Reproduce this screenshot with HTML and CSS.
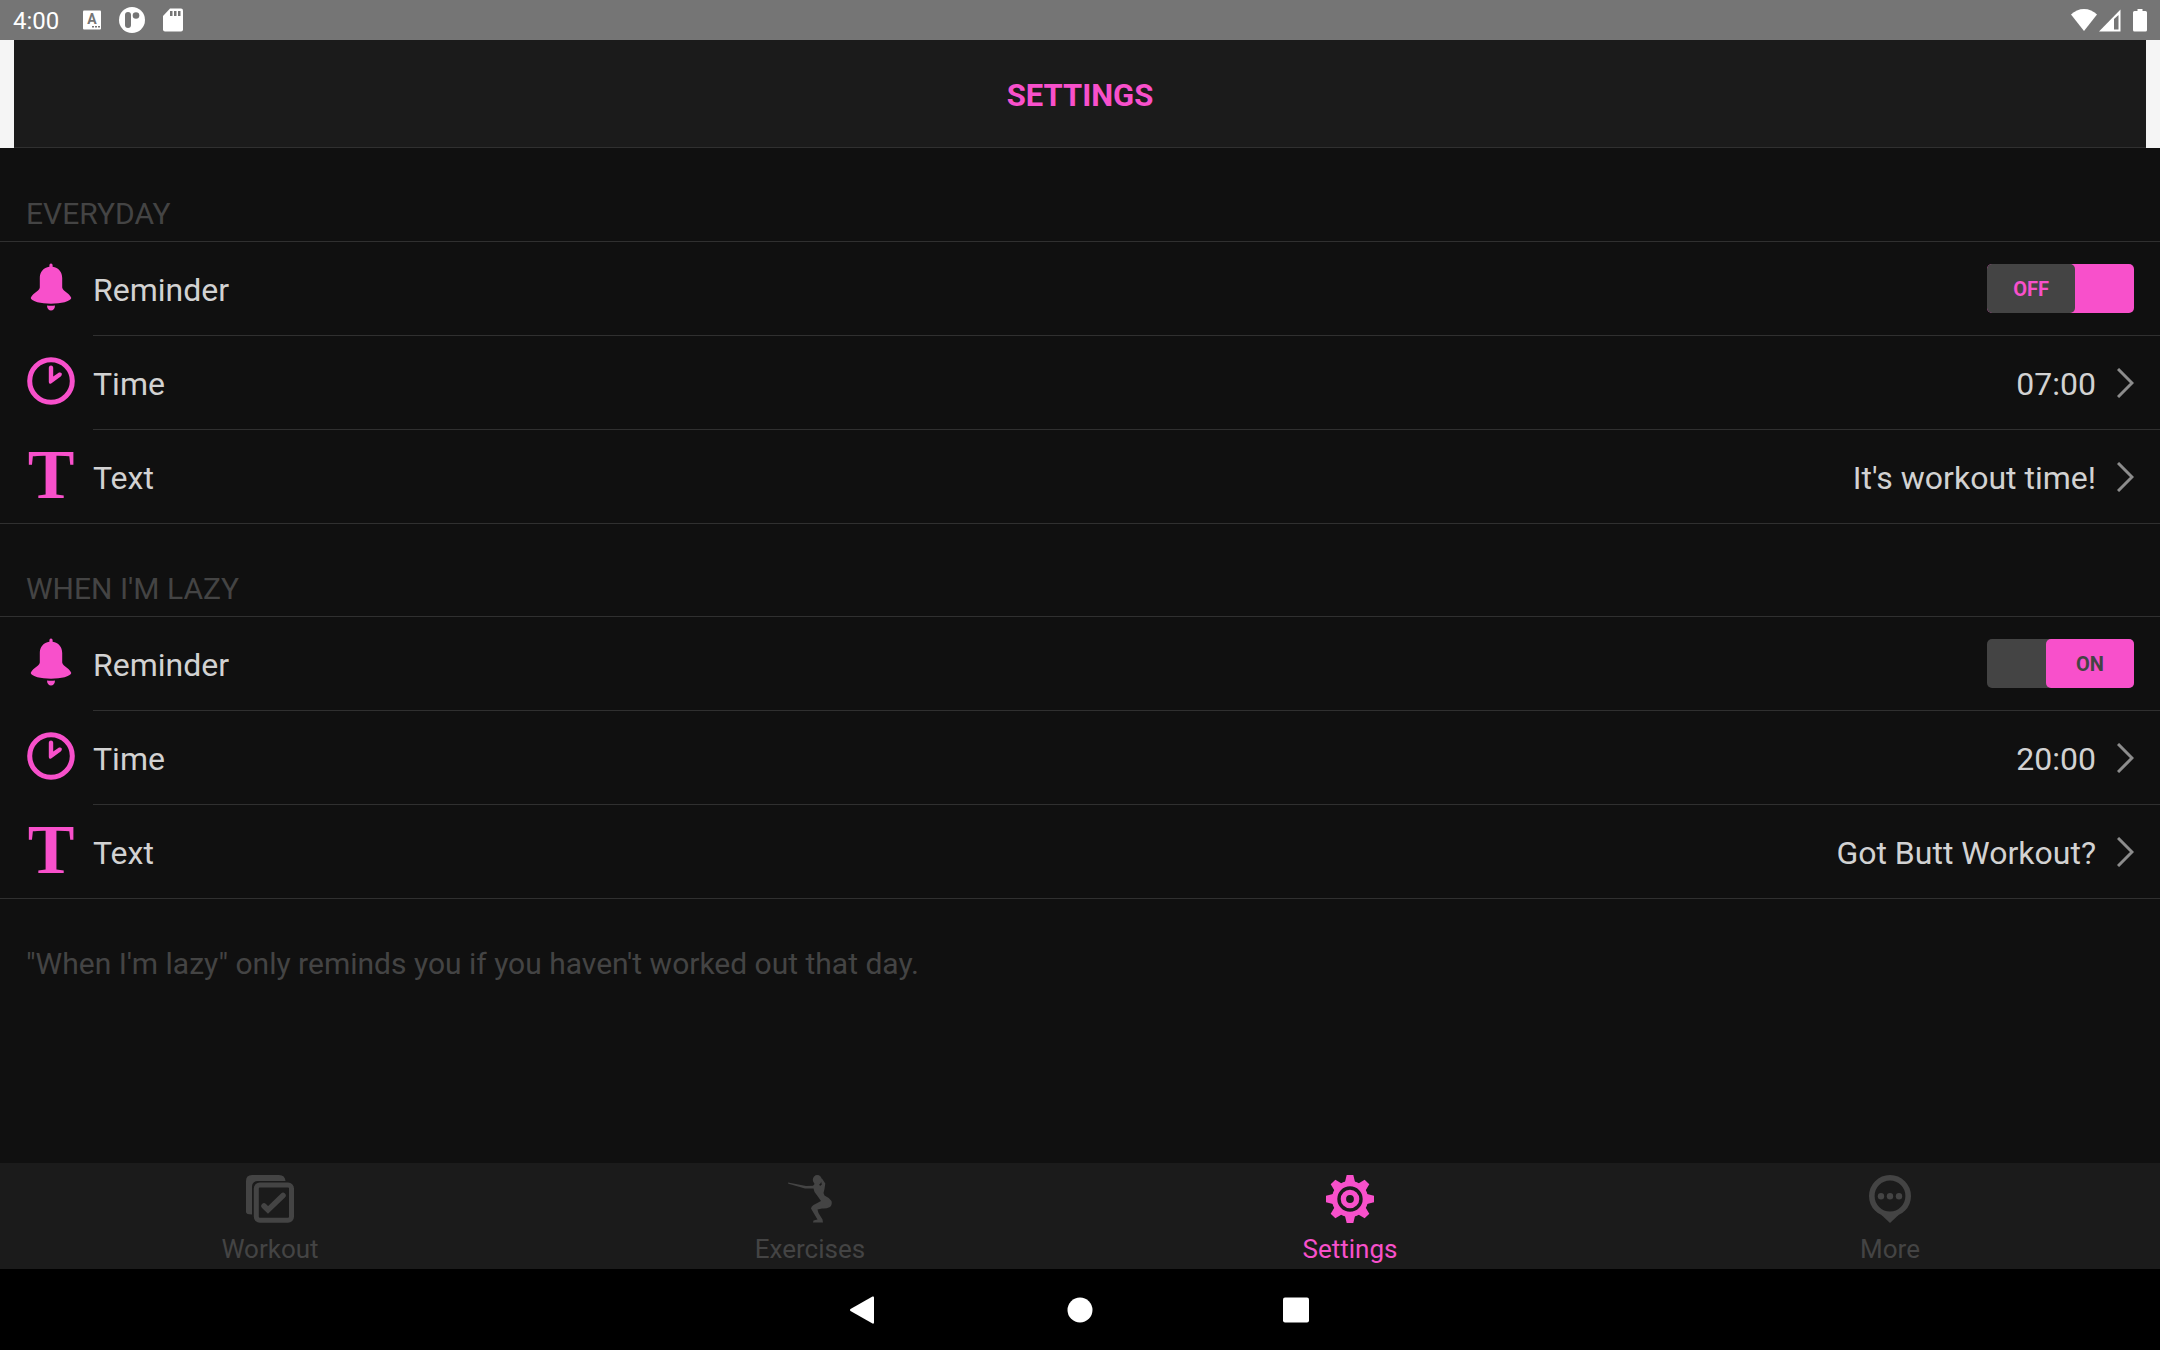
FILE: index.html
```html
<!DOCTYPE html>
<html lang="en">
<head>
    <meta charset="UTF-8">
    <meta name="viewport" content="width=device-width, initial-scale=1.0">
    <title>Settings</title>
    <link rel="stylesheet" href="styles.css">
</head>
<body>
    <!-- shared icons -->
    <svg class="sprite" aria-hidden="true">
        <symbol id="bell" viewBox="0 0 48 48">
            <path d="M22.4 1.8Q24 -.8 25.6 1.8V3.8C31.5 4.6 35.2 9 35.2 15V24.5Q35.4 26.2 37 27.6C40.5 30.4 43.6 32.6 44.3 35C43.5 38.5 34 40.7 24 40.7S4.5 38.5 3.7 35C4.4 32.6 7.5 30.4 11 27.6Q12.7 26.2 12.8 24.5V15C12.8 9 16.5 4.6 22.4 3.8ZM20 42.4Q24 42.9 28 42.4C28 49.2 20 49.2 20 42.4Z"/>
        </symbol>
        <symbol id="clock" viewBox="0 0 48 48">
            <circle cx="24" cy="24" r="21.3" fill="none" stroke="currentColor" stroke-width="5"/>
            <path d="M21.8 10.5Q22 8.6 24 8.6T26.200 10.5V19.500L32 15.600Q34.800 15 34.900 17Q34.700 18.600 33.700 19.400L24.500 26.300Q21.800 27.800 21.800 25Z"/>
        </symbol>
        <symbol id="chevron" viewBox="0 0 17 30">
            <path d="M1 1L15 15L1 29" fill="none" stroke="currentColor" stroke-width="3"/>
        </symbol>
    </svg>

    <div class="status-bar">
        <span class="clock">4:00</span>
        <div class="status-left">
            <svg width="18" height="20" viewBox="0 0 18 20"><rect y=".5" width="18" height="19" rx="1"/><text x="9" y="14" class="key-letter">A</text><path class="cut" d="M9 16h2v1.5H9zM12 16h2v1.5h-2zM15 16h2v1.5h-2z"/></svg>
            <svg width="26" height="26" viewBox="0 0 26 26"><circle cx="13" cy="13" r="13"/><rect class="cut" x="6" y="5" width="6" height="16" rx="3"/><circle class="cut" cx="17" cy="8.5" r="3.3"/></svg>
            <svg width="20" height="24" viewBox="0 0 20 24"><path d="M7 .5H18Q20 .5 20 2.5V21.5Q20 23.5 18 23.5H2Q0 23.5 0 21.5V8Z"/><path class="cut" d="M7 3h2.5v5H7zM11 3h2.5v5H11zM15 3h2.5v5H15z"/></svg>
        </div>
        <div class="status-right">
            <svg width="26" height="24" viewBox="0 0 26 24"><path d="M0 6.5C7 -1 19 -1 26 6.5L13 23Z"/></svg>
            <svg width="22" height="24" viewBox="0 0 22 24"><path d="M0 23.5L21.5 1.5V23.5Z"/><path class="cut" d="M15 11L19.5 7V21.5H15Z"/></svg>
            <svg class="battery" width="14" height="24" viewBox="0 0 14 24"><path d="M4.5 1H9.5V3H12.5Q14 3 14 4.5V22Q14 23.5 12.5 23.5H1.5Q0 23.5 0 22V4.5Q0 3 1.5 3H4.5Z"/></svg>
        </div>
    </div>

    <header class="header">
        <h1>SETTINGS</h1>
    </header>

    <main class="main">
        <section class="group">
            <h2>EVERYDAY</h2>
            <div class="rows">
                <label class="row">
                    <svg class="row-icon"><use href="#bell"/></svg>
                    <span class="row-body">
                        <span class="name">Reminder</span>
                        <span class="switch">
                            <input type="checkbox">
                            <span class="off">OFF</span>
                            <span class="on">ON</span>
                        </span>
                    </span>
                </label>
                <button class="row">
                    <svg class="row-icon"><use href="#clock"/></svg>
                    <span class="row-body">
                        <span class="name">Time</span>
                        <span class="value">07:00</span>
                        <svg class="chevron"><use href="#chevron"/></svg>
                    </span>
                </button>
                <button class="row">
                    <span class="row-icon letter" aria-hidden="true">T</span>
                    <span class="row-body">
                        <span class="name">Text</span>
                        <span class="value">It's workout time!</span>
                        <svg class="chevron"><use href="#chevron"/></svg>
                    </span>
                </button>
            </div>
        </section>

        <section class="group">
            <h2>WHEN I'M LAZY</h2>
            <div class="rows">
                <label class="row">
                    <svg class="row-icon"><use href="#bell"/></svg>
                    <span class="row-body">
                        <span class="name">Reminder</span>
                        <span class="switch">
                            <input type="checkbox" checked>
                            <span class="off">OFF</span>
                            <span class="on">ON</span>
                        </span>
                    </span>
                </label>
                <button class="row">
                    <svg class="row-icon"><use href="#clock"/></svg>
                    <span class="row-body">
                        <span class="name">Time</span>
                        <span class="value">20:00</span>
                        <svg class="chevron"><use href="#chevron"/></svg>
                    </span>
                </button>
                <button class="row">
                    <span class="row-icon letter" aria-hidden="true">T</span>
                    <span class="row-body">
                        <span class="name">Text</span>
                        <span class="value">Got Butt Workout?</span>
                        <svg class="chevron"><use href="#chevron"/></svg>
                    </span>
                </button>
            </div>
        </section>

        <p class="note">"When I'm lazy" only reminds you if you haven't worked out that day.</p>
    </main>

    <nav class="tabs">
        <a href="#workout">
            <svg viewBox="0 0 48 48">
                <path d="M0 37V6Q0 0 6 0H33Q39 0 39.5 6H12Q6 6 6 12V39.5Q0 39.5 0 37Z"/>
                <rect x="10.3" y="10.1" width="35.2" height="35.2" rx="3.5" fill="none" stroke="currentColor" stroke-width="5"/>
                <path d="M18 31L22 35L37 20.5" fill="none" stroke="currentColor" stroke-width="5.5" stroke-linecap="round"/>
            </svg>
            Workout
        </a>
        <a href="#exercises">
            <svg viewBox="0 0 48 48">
                <ellipse cx="31.3" cy="4.8" rx="4.5" ry="4.8"/>
                <path d="M2 7.5L6 8.2L20 11L27 10.7L29.5 8L33 8.5L34 11L35.8 9.5L34.5 4L36 3.5L39.3 8.5L38.5 14L37.500 18L38.5 20.5Q43 22.5 45.5 26Q46.5 29.5 44 32Q40 34 36 33.5L31.5 34.5L32.5 38L36.5 44.5L37 47.5H27L27.5 45.5L31.5 44.5L28.5 39.5L25 33.5Q25 31.5 27.500 30L35 26L31.5 21L28.5 17L27.500 13.5L19 13.5L6 9.7L2.3 8.7Z"/>
            </svg>
            Exercises
        </a>
        <a href="#settings" class="active">
            <svg viewBox="0 0 48 48">
                <g id="teeth">
                    <path d="M18.5 9L20.700 0H27.300L29.500 9ZM18.5 39L20.700 48H27.300L29.500 39ZM9 18.5L0 20.700V27.300L9 29.500ZM39 18.5L48 20.700V27.300L39 29.500Z"/>
                </g>
                <use href="#teeth" transform="rotate(45 24 24)"/>
                <circle cx="24" cy="24" r="15.400" fill="none" stroke="currentColor" stroke-width="5.400"/>
                <circle cx="24" cy="24" r="6.600" fill="none" stroke="currentColor" stroke-width="5.400"/>
            </svg>
            Settings
        </a>
        <a href="#more">
            <svg viewBox="0 0 48 48">
                <circle cx="24" cy="21" r="18.2" fill="none" stroke="currentColor" stroke-width="5.6"/>
                <path d="M15 39.5L24 48L33 39.5Z"/>
                <circle cx="15" cy="21.3" r="3.2"/>
                <circle cx="24" cy="21.3" r="3.2"/>
                <circle cx="33" cy="21.3" r="3.2"/>
            </svg>
            More
        </a>
    </nav>

    <div class="nav-bar">
        <button aria-label="Back"><svg viewBox="0 0 28 28"><path d="M.5 13Q-.5 14 .5 15L22.500 27.500Q24 28 24 26.500V1.500Q24 0 22.500 .5Z"/></svg></button>
        <button aria-label="Home"><svg viewBox="0 0 28 28"><circle cx="14" cy="14" r="12.5"/></svg></button>
        <button aria-label="Recent apps"><svg viewBox="0 0 28 28"><rect x="1" y="1.5" width="26" height="25" rx="2"/></svg></button>
    </div>
</body>
</html>
```

FILE: styles.css
```css
* {
    box-sizing: border-box;
}
body {
    margin: 0;
    min-height: 100vh;
    display: flex;
    flex-direction: column;
    background-color: #101010;
    color: #d2d2d2;
    font-family: Roboto, sans-serif;
    font-size: 32px;
}
svg {
    fill: currentColor;
    display: block;
    flex-shrink: 0;
}
button {
    font: inherit;
    color: inherit;
    background: none;
    border: 0;
    padding: 0;
    text-align: left;
}
.sprite {
    position: absolute;
    width: 0;
    height: 0;
}

/* android status bar */
.status-bar {
    height: 40px;
    padding: 0 13px;
    display: flex;
    align-items: center;
    background-color: #757575;
    color: #fff;
}
.clock {
    font-size: 24px;
    line-height: 28px;
    padding-top: 2px;
}
.status-left {
    display: flex;
    align-items: center;
    gap: 18px;
    margin-left: 24px;
}
.status-right {
    display: flex;
    align-items: center;
    gap: 2px;
    margin-left: auto;
}
.battery {
    margin-left: 10px;
}
.cut,
.key-letter {
    fill: #757575;
}
.key-letter {
    font-size: 14px;
    font-weight: bold;
    text-anchor: middle;
}

.header {
    height: 108px;
    display: flex;
    align-items: center;
    justify-content: center;
    background-color: #1b1b1b;
    border: solid #f5f5f5;
    border-width: 0 14px;
    box-shadow: inset 0 -1px #303030;
}
.header h1 {
    margin: 0;
    padding-top: 3px;
    color: #f850cb;
    font-size: 31px;
    font-weight: bold;
    line-height: 38px;
}

.main {
    flex-grow: 1;
    padding-top: 1px;
}
.group h2 {
    margin: 0;
    height: 93px;
    padding: 0 26px 9px;
    display: flex;
    align-items: flex-end;
    border-bottom: 1px solid #303030;
    color: #444;
    font-size: 30px;
    font-weight: normal;
    line-height: 36px;
}
.rows {
    border-bottom: 1px solid #303030;
}
.row {
    width: 100%;
    display: flex;
    align-items: flex-start;
    padding-left: 27px;
}
.row-icon {
    width: 48px;
    height: 48px;
    margin: 21px 18px 0 0;
    color: #f850cb;
}
.letter {
    font-family: "Liberation Serif", serif;
    font-size: 70px;
    font-weight: bold;
    line-height: 48px;
    text-align: center;
}
.row-body {
    flex-grow: 1;
    height: 94px;
    padding-right: 26px;
    display: flex;
    align-items: center;
    border-bottom: 1px solid #303030;
}
.row:last-child .row-body {
    height: 93px;
    border-bottom: 0;
}
.name,
.value {
    line-height: 38px;
    padding-top: 2px;
}
.name {
    flex-grow: 1;
}
.chevron {
    width: 17px;
    height: 30px;
    margin-left: 21px;
    color: #8c8c8c;
}

/* on/off switch */
.switch {
    position: relative;
    display: flex;
    width: 147px;
    height: 49px;
    border-radius: 5px;
    background-color: #f850cb;
    font-size: 20px;
    font-weight: bold;
}
.switch input {
    position: absolute;
    inset: 0;
    width: 100%;
    height: 100%;
    margin: 0;
    opacity: 0;
}
.off,
.on {
    width: 88px;
    line-height: 51px;
    border-radius: 5px;
    text-align: center;
}
.off {
    background-color: #444;
    color: #f850cb;
}
.on {
    display: none;
    margin-left: auto;
    background-color: #f850cb;
    color: #444;
}
.switch:has(input:checked) {
    background-color: #444;
}
.switch input:checked ~ .off {
    display: none;
}
.switch input:checked ~ .on {
    display: block;
}

.note {
    margin: 0;
    padding: 47px 26px;
    color: #444;
    font-size: 30px;
    line-height: 36px;
}

.tabs {
    height: 106px;
    display: flex;
    background-color: #1b1b1b;
}
.tabs a {
    flex: 1;
    padding-top: 12px;
    display: flex;
    flex-direction: column;
    align-items: center;
    gap: 11px;
    color: #444;
    font-size: 26px;
    line-height: 30px;
    text-decoration: none;
}
.tabs a.active {
    color: #f850cb;
}
.tabs svg {
    width: 48px;
    height: 48px;
}

/* android navigation bar */
.nav-bar {
    height: 81px;
    display: flex;
    justify-content: center;
    background-color: #000;
    color: #fff;
}
.nav-bar button {
    width: 10%;
    display: flex;
    align-items: center;
    justify-content: center;
}
.nav-bar svg {
    width: 28px;
    height: 28px;
}
```
